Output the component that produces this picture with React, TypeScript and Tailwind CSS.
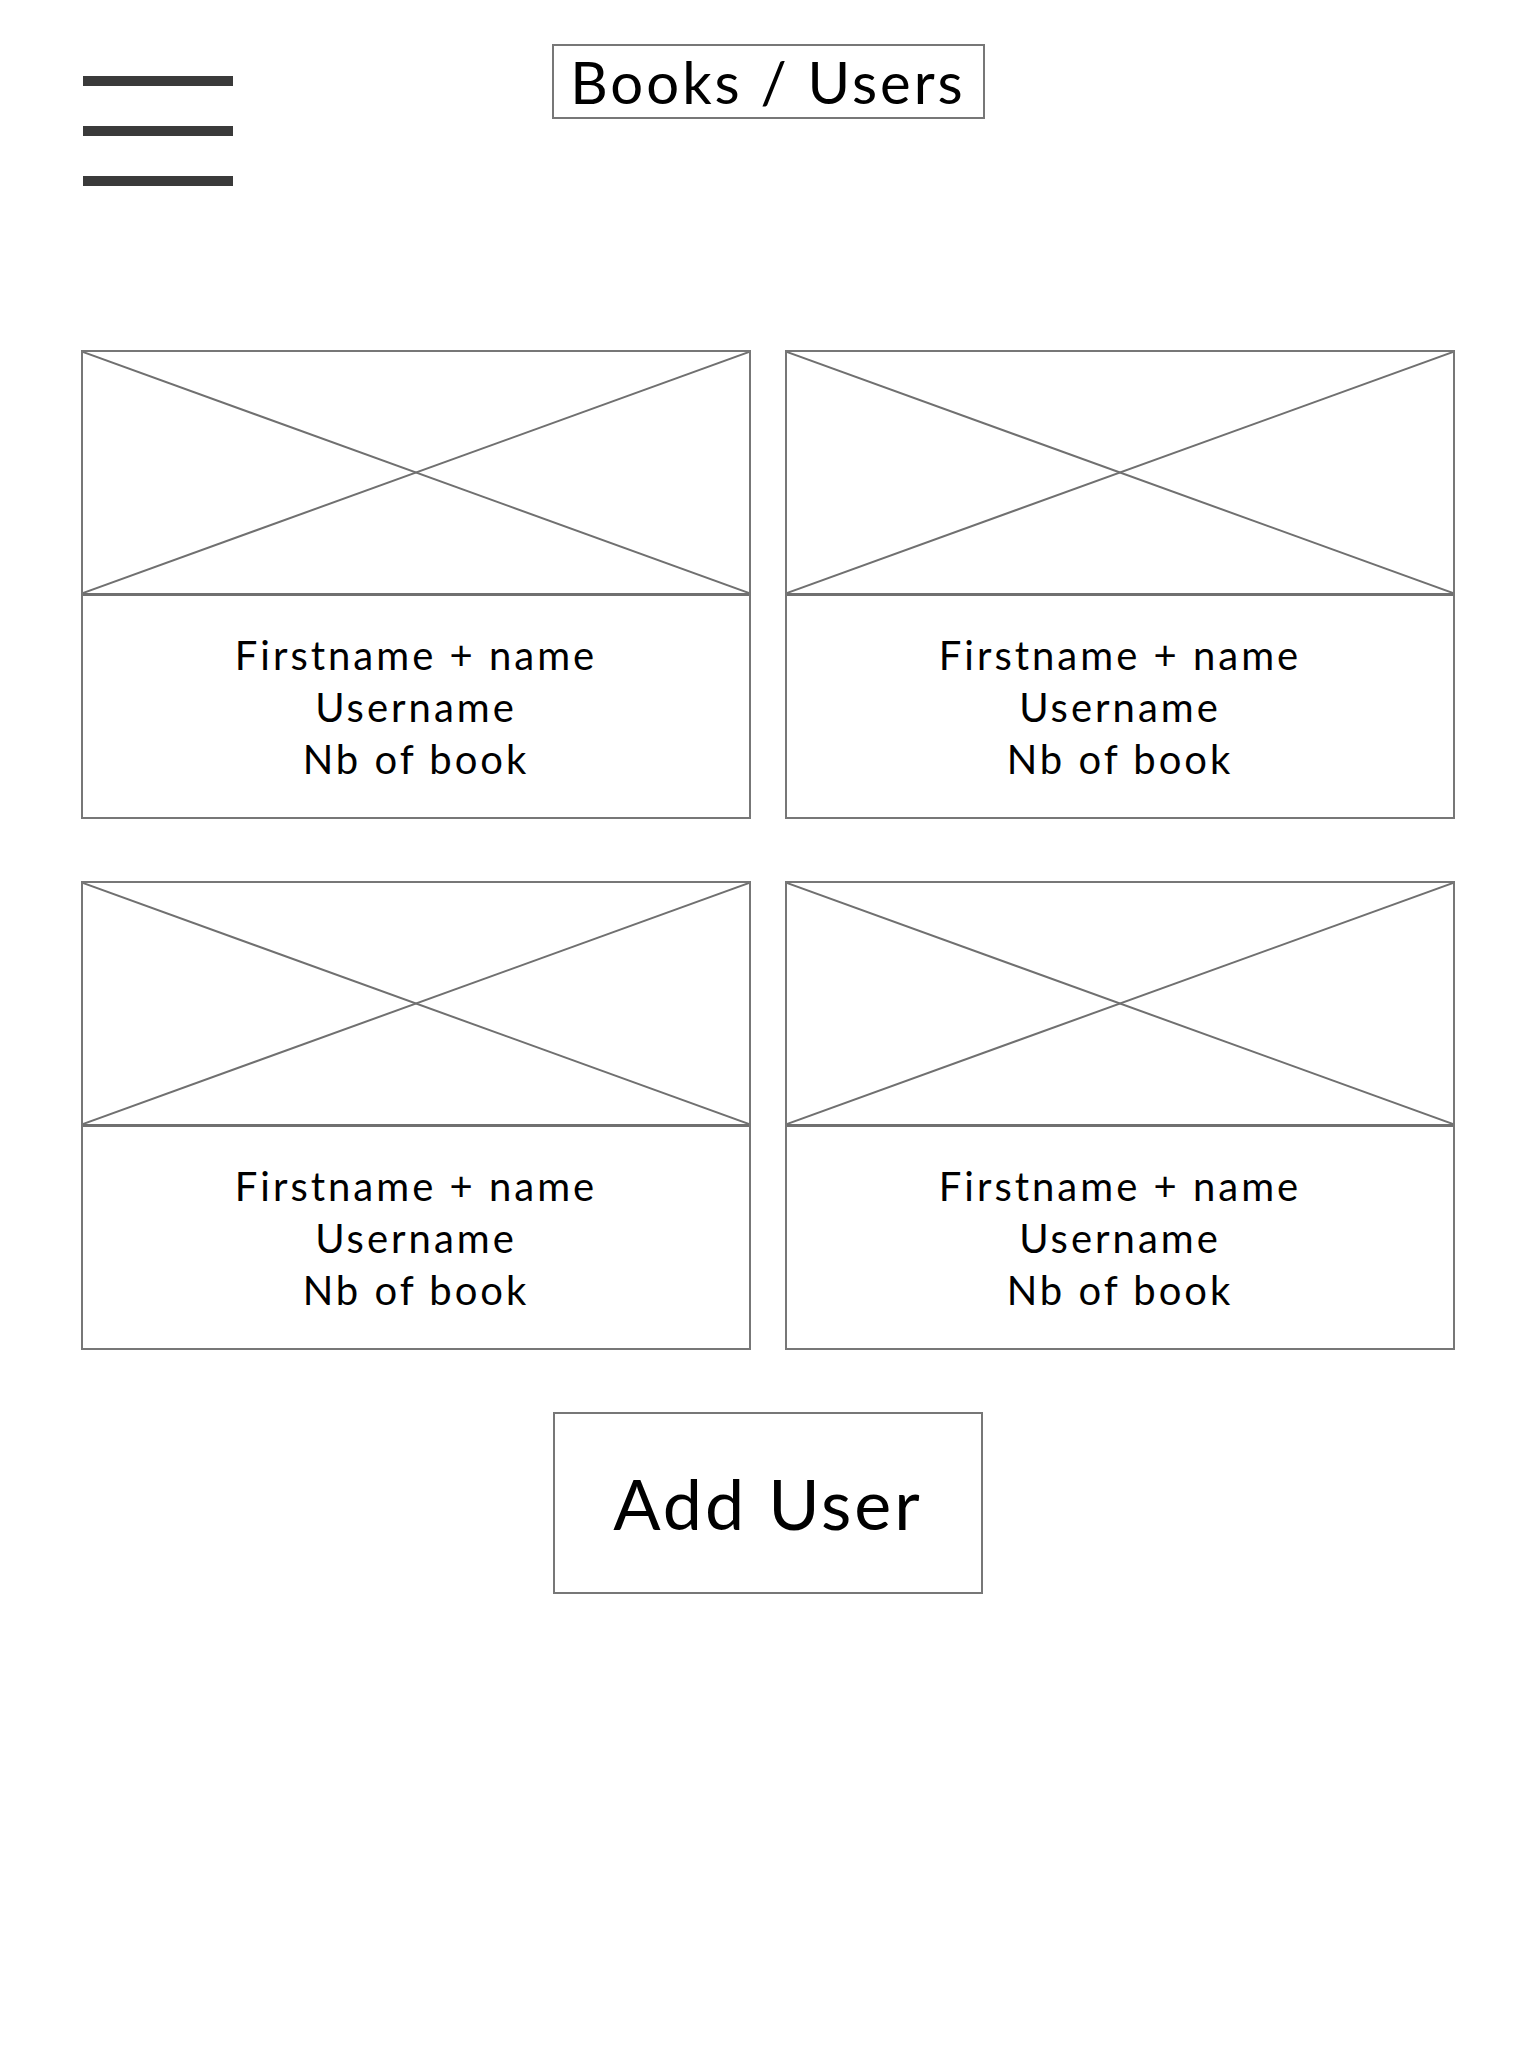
import React from "react";

const users = [1, 2, 3, 4];

function ImagePlaceholder() {
  return (
    <div className="h-[244px] border-b-[3px] border-[#707070]">
      <svg
        className="block h-full w-full"
        viewBox="0 0 100 100"
        preserveAspectRatio="none"
      >
        <line x1="0" y1="0" x2="100" y2="100" stroke="#707070" strokeWidth="2" vectorEffect="non-scaling-stroke" />
        <line x1="100" y1="0" x2="0" y2="100" stroke="#707070" strokeWidth="2" vectorEffect="non-scaling-stroke" />
      </svg>
    </div>
  );
}

function UserCard() {
  return (
    <div className="flex h-[469px] flex-col border-2 border-[#777]">
      <ImagePlaceholder />
      <div className="flex flex-1 flex-col items-center justify-center text-[40px] leading-[52px] tracking-[3px] text-black">
        <p>Firstname + name</p>
        <p>Username</p>
        <p>Nb of book</p>
      </div>
    </div>
  );
}

export default function App() {
  return (
    <div className="min-h-[2048px] bg-white px-[81px] pt-[44px] font-['Lato',sans-serif]">
      {/* Header */}
      <div className="grid grid-cols-[1fr_auto_1fr] items-start">
        <div className="mt-[32px] flex flex-col gap-[40px] pl-[2px]">
          <span className="block h-[10px] w-[150px] bg-[#3a3a3a]" />
          <span className="block h-[10px] w-[150px] bg-[#3a3a3a]" />
          <span className="block h-[10px] w-[150px] bg-[#3a3a3a]" />
        </div>
        <h1 className="flex h-[75px] w-[433px] items-center justify-center border-2 border-[#777] text-[58px] leading-none tracking-[3px] text-black">
          Books / Users
        </h1>
        <div />
      </div>

      {/* Users grid */}
      <div className="mt-[164px] grid grid-cols-2 gap-x-[34px] gap-y-[62px]">
        {users.map((u) => (
          <UserCard key={u} />
        ))}
      </div>

      <div className="mt-[62px] flex justify-center">
        <button className="flex h-[182px] w-[430px] items-center justify-center border-2 border-[#777] text-[70px] leading-none tracking-[3px] text-black">
          Add User
        </button>
      </div>
    </div>
  );
}
